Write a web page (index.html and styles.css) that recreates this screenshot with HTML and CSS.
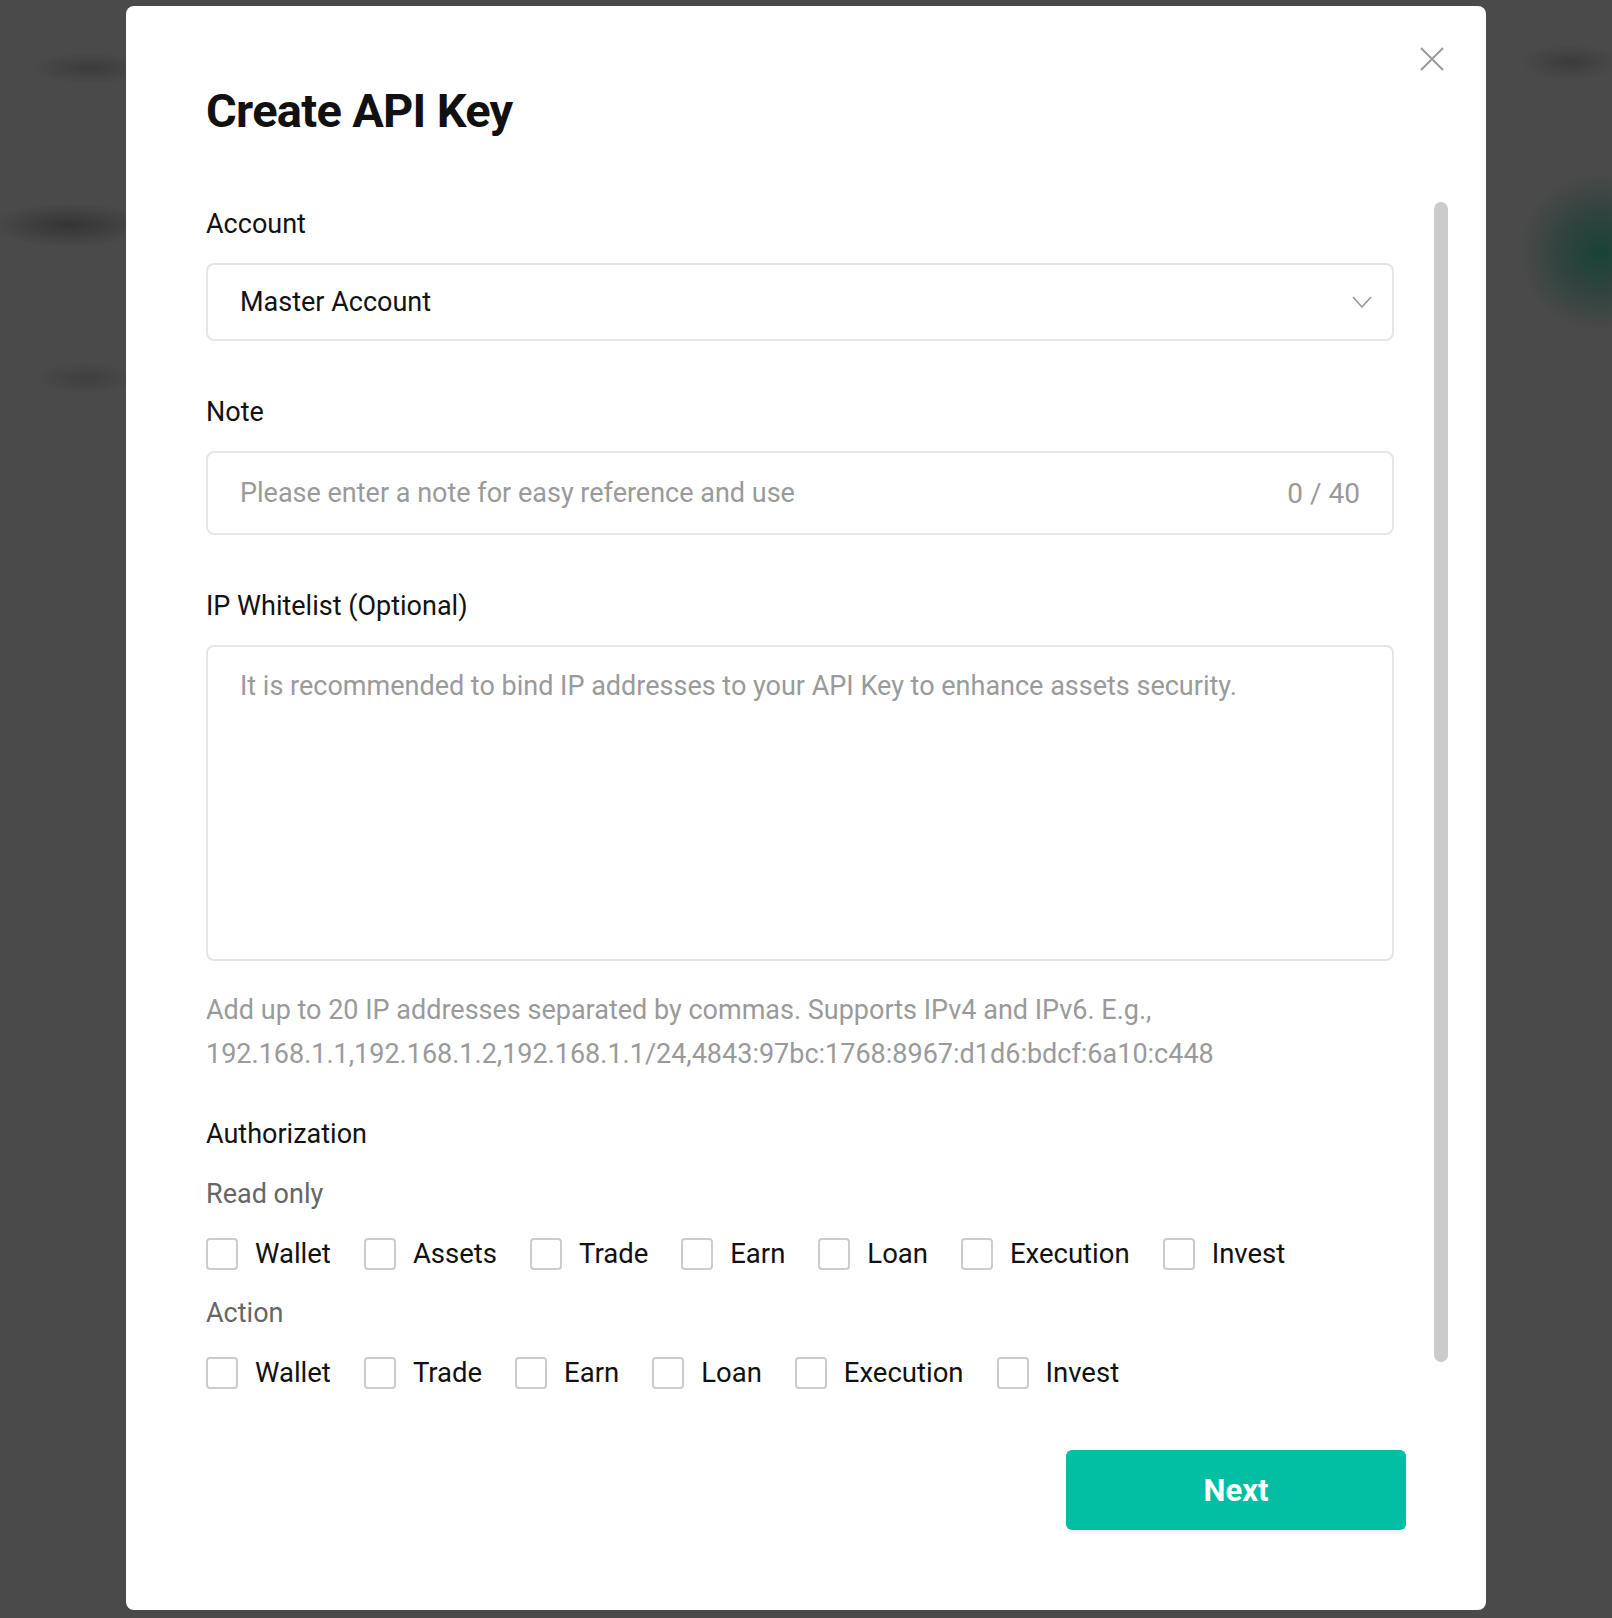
FILE: index.html
```html
<!DOCTYPE html>
<html lang="en">

<head>
    <meta charset="UTF-8">
    <meta name="viewport" content="width=device-width, initial-scale=1.0">
    <title>Create API Key</title>
    <link rel="stylesheet" href="styles.css">
</head>

<body>
    <div class="backdrop">
        <div class="modal">
            <button type="button" class="close" aria-label="Close">
                <svg width="24" height="24" viewBox="0 0 24 24">
                    <path d="M1 1L23 23M23 1L1 23" stroke="#999" stroke-width="2" fill="none" />
                </svg>
            </button>
            <h1 class="title">Create API Key</h1>
            <div class="modal-body">
                <form class="content">
                    <div class="field">
                        <label class="field-label">Account</label>
                        <div class="select">
                            <span>Master Account</span>
                            <svg width="20" height="12" viewBox="0 0 20 12">
                                <path d="M1 1L10 11L19 1" stroke="#999" stroke-width="1.6" fill="none" />
                            </svg>
                        </div>
                    </div>
                    <div class="field">
                        <label class="field-label" for="note">Note</label>
                        <div class="input-box">
                            <input type="text" id="note" class="text-input"
                                placeholder="Please enter a note for easy reference and use">
                            <span class="counter">0 / 40</span>
                        </div>
                    </div>
                    <div class="field">
                        <label class="field-label" for="ipList">IP Whitelist (Optional)</label>
                        <textarea id="ipList" class="textarea"
                            placeholder="It is recommended to bind IP addresses to your API Key to enhance assets security."></textarea>
                    </div>
                    <p class="hint">Add up to 20 IP addresses separated by commas. Supports IPv4 and IPv6. E.g., 192.168.1.1,192.168.1.2,192.168.1.1/24,4843:97bc:1768:8967:d1d6:bdcf:6a10:c448</p>

                    <div class="auth-title">Authorization</div>
                    <div class="group-title">Read only</div>
                    <div class="checks">
                        <label class="check"><input type="checkbox"> Wallet</label>
                        <label class="check"><input type="checkbox"> Assets</label>
                        <label class="check"><input type="checkbox"> Trade</label>
                        <label class="check"><input type="checkbox"> Earn</label>
                        <label class="check"><input type="checkbox"> Loan</label>
                        <label class="check"><input type="checkbox"> Execution</label>
                        <label class="check"><input type="checkbox"> Invest</label>
                    </div>
                    <div class="group-title action">Action</div>
                    <div class="checks">
                        <label class="check"><input type="checkbox"> Wallet</label>
                        <label class="check"><input type="checkbox"> Trade</label>
                        <label class="check"><input type="checkbox"> Earn</label>
                        <label class="check"><input type="checkbox"> Loan</label>
                        <label class="check"><input type="checkbox"> Execution</label>
                        <label class="check"><input type="checkbox"> Invest</label>
                    </div>
                </form>
                <div class="scroll-thumb"></div>
            </div>
            <div class="footer">
                <button type="button" class="next">Next</button>
            </div>
        </div>
    </div>
</body>

</html>
```

FILE: styles.css
```css
* {
    box-sizing: border-box;
}

html,
body {
    margin: 0;
}

body {
    font-family: Roboto, "Liberation Sans", sans-serif;
    color: #121212;
    background-color: #4a4a4a;
    background-image:
        radial-gradient(circle at 1600px 252px, rgba(22, 66, 54, 0.95) 0, rgba(30, 62, 54, 0.6) 38px, rgba(74, 74, 74, 0) 80px),
        radial-gradient(ellipse 80px 22px at 70px 225px, rgba(50, 50, 50, 0.9), rgba(74, 74, 74, 0)),
        radial-gradient(ellipse 60px 16px at 90px 68px, rgba(58, 58, 58, 0.9), rgba(74, 74, 74, 0)),
        radial-gradient(ellipse 50px 16px at 85px 378px, rgba(60, 60, 60, 0.8), rgba(74, 74, 74, 0)),
        radial-gradient(ellipse 50px 18px at 1570px 62px, rgba(58, 58, 58, 0.9), rgba(74, 74, 74, 0));
    min-height: 1618px;
}

.backdrop {
    display: flex;
    justify-content: center;
    padding: 6px 0 8px;
}

.modal {
    position: relative;
    width: 1360px;
    height: 1604px;
    background-color: #fff;
    border-radius: 8px;
    padding: 78px 38px 80px 80px;
    display: flex;
    flex-direction: column;
}

.close {
    position: absolute;
    top: 41px;
    right: 42px;
    width: 24px;
    height: 24px;
    padding: 0;
    border: none;
    background: none;
    cursor: pointer;
}

.close svg {
    display: block;
}

.title {
    margin: 0 0 64px;
    font-size: 47px;
    line-height: 54px;
    font-weight: 700;
    letter-spacing: -0.7px;
    color: #111;
}

.modal-body {
    display: flex;
    align-items: flex-start;
}

.content {
    width: 1188px;
    margin: 0;
}

.scroll-thumb {
    width: 14px;
    height: 1160px;
    margin-left: 40px;
    background-color: #cbcbcb;
    border-radius: 7px;
}

.field + .field {
    margin-top: 49px;
}

.field-label {
    display: block;
    font-size: 27px;
    line-height: 44px;
    margin-bottom: 17px;
}

.select {
    height: 78px;
    border: 2px solid #e6e6e6;
    border-radius: 8px;
    padding: 0 20px 0 32px;
    display: flex;
    align-items: center;
    justify-content: space-between;
    font-size: 27px;
}

.select svg {
    display: block;
}

.input-box {
    height: 84px;
    border: 2px solid #e6e6e6;
    border-radius: 8px;
    padding: 0 32px;
    display: flex;
    align-items: center;
}

.text-input {
    flex: 1;
    border: none;
    outline: none;
    padding: 0;
    font-family: inherit;
    font-size: 27px;
    color: #121212;
    background: none;
}

.text-input::placeholder,
.textarea::placeholder {
    color: #9a9a9a;
}

.counter {
    font-size: 28px;
    color: #9a9a9a;
}

.textarea {
    display: block;
    width: 100%;
    height: 316px;
    border: 2px solid #e6e6e6;
    border-radius: 8px;
    padding: 21px 32px;
    font-family: inherit;
    font-size: 27px;
    line-height: 36px;
    color: #121212;
    resize: none;
    outline: none;
}

.hint {
    margin: 27px 0 0;
    font-size: 27px;
    line-height: 44px;
    color: #9a9a9a;
}

.auth-title {
    margin-top: 36px;
    font-size: 27px;
    line-height: 44px;
}

.group-title {
    margin-top: 16px;
    font-size: 27px;
    line-height: 44px;
    color: #666;
}

.group-title.action {
    margin-top: 15px;
}

.checks {
    margin-top: 16px;
    display: flex;
    gap: 33px;
}

.check {
    display: flex;
    align-items: center;
    gap: 17px;
    font-size: 27.5px;
    line-height: 44px;
    color: #111;
}

.check input {
    appearance: none;
    -webkit-appearance: none;
    width: 32px;
    height: 32px;
    margin: 0;
    border: 2px solid #cccccc;
    border-radius: 4px;
    background-color: #fff;
}

.footer {
    margin-top: auto;
    margin-right: 42px;
    display: flex;
    justify-content: flex-end;
}

.next {
    width: 340px;
    height: 80px;
    border: none;
    border-radius: 6px;
    background-color: #02bea3;
    color: #fff;
    font-family: inherit;
    font-size: 31px;
    font-weight: 700;
    box-shadow: 0 4px 3px rgba(0, 0, 0, 0.05);
    cursor: pointer;
}
```
